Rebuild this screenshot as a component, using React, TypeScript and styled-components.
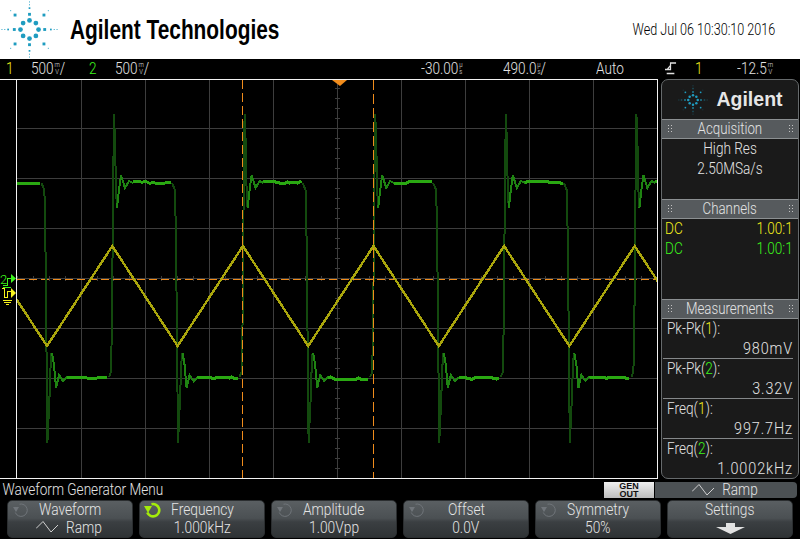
import * as React from "react";
import styled, { createGlobalStyle } from "styled-components";

const YELLOW = "#f7f21c";
const GREEN = "#3df51c";
const ORANGE = "#f08c1c";
const BLUE = "#1f9cc0";

const Global = createGlobalStyle`
  html, body { margin: 0; padding: 0; background: #000; }
  body { font-family: Roboto, "Liberation Sans", Arial, sans-serif; font-weight: 300; }
`;

const Page = styled.div`
  width: 800px;
  height: 539px;
  background: #000;
  color: #e4e4e4;
  display: flex;
  flex-direction: column;
  overflow: hidden;
`;

const Header = styled.header`
  height: 59px;
  background: #fff;
  color: #000;
  display: flex;
  align-items: center;
  justify-content: space-between;
  padding: 0 25px 0 0;
`;

const Brand = styled.div`
  display: flex;
  align-items: center;
  gap: 12px;
  padding-left: 1px;
`;

const Title = styled.div`
  font-family: "Liberation Sans", Arial, sans-serif;
  font-size: 28px;
  font-weight: 700;
  line-height: 59px;
  white-space: nowrap;
  transform: scaleX(0.745);
  transform-origin: left center;
`;

const Clock = styled.div`
  font-size: 16px;
  white-space: nowrap;
  transform: scaleX(0.787);
  transform-origin: right center;
`;

const StatusBar = styled.div`
  height: 20px;
  box-sizing: border-box;
  padding: 0 0 1px 6px;
  display: grid;
  grid-template-columns: 25px 58px 26px 306px 82px 93px 69px 30px 42px 1fr;
  align-items: center;
  font-size: 16px;
  line-height: 19px;
`;

const Cell = styled.span<{ $color?: string }>`
  display: flex;
  align-items: center;
  white-space: nowrap;
  color: ${(p) => p.$color || "inherit"};
  transform: scaleX(0.85);
  transform-origin: left center;
`;

const Units = styled.span`
  display: inline-flex;
  flex-direction: column;
  align-items: center;
  font-size: 7px;
  line-height: 7px;
  margin-left: 1px;
`;

const Middle = styled.div`
  height: 400px;
  display: flex;
`;

const Display = styled.svg`
  width: 658px;
  height: 400px;
  display: block;
  flex: none;
`;

const Panel = styled.aside`
  width: 138px;
  height: 400px;
  margin-left: 3px;
  box-sizing: border-box;
  border: 1px solid #666a6c;
  border-radius: 7px;
  background: #1a1a1a;
  display: flex;
  flex-direction: column;
  overflow: hidden;
  font-size: 16px;
`;

const PanelBrand = styled.div`
  height: 39px;
  flex: none;
  display: flex;
  align-items: center;
  justify-content: center;
  gap: 8px;
  padding-left: 1px;
  font-family: "Liberation Sans", Arial, sans-serif;
  font-size: 19.5px;
  font-weight: 700;
  color: #e6e6e6;
`;

const SectionHead = styled.div`
  height: 20px;
  flex: none;
  box-sizing: border-box;
  border-top: 1px solid #8c9092;
  border-bottom: 1px solid #8c9092;
  background: #565a5d;
  display: flex;
  align-items: center;
  justify-content: space-between;
  padding: 0 5px 2px;
`;

const SectionName = styled.span`
  transform: scaleX(0.83);
`;

const Grip = styled.i`
  width: 5px;
  height: 9px;
  background-image: radial-gradient(circle, #c4c4c4 0.8px, transparent 1px);
  background-size: 3px 3px;
`;

const Body = styled.div<{ $h: number }>`
  height: ${(p) => p.$h}px;
  flex: none;
  display: flex;
  flex-direction: column;
`;

const CenterLine = styled.div`
  height: 20px;
  line-height: 20px;
  text-align: center;
  transform: scaleX(0.85);
`;

const ChannelRow = styled.div<{ $color: string }>`
  height: 20px;
  line-height: 20px;
  display: flex;
  justify-content: space-between;
  padding: 0 5px 0 3px;
  color: ${(p) => p.$color};
`;

const ChannelCoupling = styled.span`
  transform: scaleX(0.85);
  transform-origin: left center;
`;

const ChannelRatio = styled.span`
  transform: scaleX(0.85);
  transform-origin: right center;
`;

const Measure = styled.div<{ $last?: boolean }>`
  height: 40px;
  box-sizing: border-box;
  margin: 0 5px 0 1px;
  padding-left: 4px;
  border-bottom: ${(p) => (p.$last ? "none" : "1px solid #85888a")};
  line-height: 20px;
`;

const MeasureName = styled.div`
  transform: scaleX(0.85);
  transform-origin: left center;
`;

const MeasureValue = styled.div`
  text-align: right;
  letter-spacing: 1px;
  transform: scaleX(0.9);
  transform-origin: right center;
`;

const Tint = styled.span<{ $color: string }>`
  color: ${(p) => p.$color};
`;

const MenuBar = styled.div`
  height: 21px;
  display: flex;
  align-items: center;
`;

const MenuTitle = styled.div`
  font-size: 16px;
  padding-left: 3px;
  width: 604px;
  box-sizing: border-box;
  white-space: nowrap;
  transform: scaleX(0.85);
  transform-origin: left center;
`;

const GenOut = styled.div`
  width: 50px;
  height: 16px;
  background: linear-gradient(#f0f0f0, #bdbdbd);
  color: #111;
  font-family: "Liberation Sans", Arial, sans-serif;
  font-size: 9px;
  font-weight: 700;
  line-height: 8px;
  text-align: center;
`;

const RampTag = styled.div`
  width: 142px;
  height: 16px;
  margin-left: 1px;
  background: #4c5154;
  border-radius: 0 4px 4px 0;
  display: flex;
  align-items: center;
  justify-content: center;
  gap: 5px;
`;

const RampLabel = styled.span`
  transform: scaleX(0.85);
`;

const Keys = styled.div`
  display: flex;
  gap: 6px;
  padding-left: 7px;
  height: 39px;
`;

const Key = styled.div`
  position: relative;
  width: 126px;
  height: 38px;
  box-sizing: border-box;
  border: 1px solid #2b2e30;
  border-radius: 5px;
  background: linear-gradient(#5a5f62, #4b5053 48%, #3b3f42 58%, #2f3335);
  text-align: center;
  font-size: 16px;
`;

const KeyLine = styled.div`
  height: 18px;
  display: flex;
  align-items: center;
  justify-content: center;
  gap: 5px;
  position: relative;
  top: -1px;
`;

const KeyText = styled.span`
  transform: scaleX(0.86);
`;

const Knob = styled.svg`
  position: absolute;
  left: 3px;
  top: -1px;
  width: 20px;
  height: 20px;
`;

const ArrowIcon = styled.svg`
  margin-top: 3px;
`;

// the spark logo, dots and squares on eight spokes
function Spark({ size, color = BLUE }: { size: number; color?: string }) {
  const items: React.ReactNode[] = [];
  for (let i = 0; i < 8; i++) {
    const a = (i * Math.PI) / 4;
    const diag = i % 2 === 1;
    const put = (r: number, s: number, round: boolean) => {
      const x = 30 + r * Math.sin(a);
      const y = 30 - r * Math.cos(a);
      items.push(
        round ? (
          <circle key={`${i}-${r}`} cx={x} cy={y} r={s / 2} fill={color} />
        ) : (
          <rect key={`${i}-${r}`} x={x - s / 2} y={y - s / 2} width={s} height={s} fill={color} />
        )
      );
    };
    put(9.5, 5, true);
    put(diag ? 16 * Math.SQRT2 * 0.95 : 16, 3, false);
    put(diag ? 22 : 22.5, diag ? 1.6 : 1.8, false);
    put(diag ? 28 : 26, 1, false);
    if (!diag) put(29, 1, false);
  }
  return (
    <svg width={size} height={size} viewBox="0 0 60 60">
      {items}
    </svg>
  );
}

function RampIcon() {
  return (
    <svg width="22" height="12" viewBox="0 0 22 12">
      <polyline points="0,7.5 7,0.5 15,11 22,4" fill="none" stroke="#d0d0d0" strokeWidth="1" />
    </svg>
  );
}

function KnobIcon({ active }: { active?: boolean }) {
  const c = active ? "#a4ec0a" : "#70757a";
  return (
    <Knob viewBox="0 0 20 20">
      <path d="M8.5 4.2A6.2 6.2 0 1 1 4.3 12.5" fill="none" stroke={c} strokeWidth={active ? 2.6 : 1} />
      <polygon points={active ? "1,6 9,6 5,13" : "2,7 8,7 5,12"} fill={c} />
    </Knob>
  );
}

function DownArrow() {
  return (
    <ArrowIcon width="29" height="11" viewBox="0 0 29 11">
      <polygon points="0,4 10,4 10,0 19,0 19,4 29,4 14.5,11" fill="#e2e2e2" />
    </ArrowIcon>
  );
}

const PERIOD = 130.6;
const FALL = 47;

// repeatable noise so the flat tops look sampled
function noise(n: number) {
  const v = Math.sin(n * 12.9898) * 43758.5453;
  return v - Math.floor(v);
}

function flat(x0: number, x1: number, y: number, seed: number) {
  const pts: string[] = [];
  let level = 0;
  for (let x = x0; x < x1; x += 2) {
    const r = noise(seed + x);
    if (r < 0.2) level = Math.max(level - 1, -1);
    if (r > 0.8) level = Math.min(level + 1, 1);
    pts.push(`${x},${y + level}`);
  }
  return pts.join(" ");
}

function shift(points: number[][], dx: number) {
  return points.map(([x, y]) => `${x + dx},${y}`).join(" ");
}

const fallEdge = [[172, 183], [175, 190], [176, 240], [177, 340], [178, 443], [180, 400], [181, 370], [182, 353]].map(
  ([x, y]) => [x - PERIOD, y]
);
const fallRing = [[52, 353], [54, 365], [56, 388], [59, 375], [63, 381], [67, 377]];
const riseEdge = [[109, 377], [111, 372], [112, 320], [113, 200], [114, 114], [115, 140], [116, 190], [117, 208]];
const riseRing = [[117, 208], [119, 190], [121, 175], [125, 188], [129, 181], [133, 183]];

function GreenTrace() {
  const parts: React.ReactNode[] = [];
  for (let k = -1; k < 5; k++) {
    const dx = k * PERIOD;
    parts.push(
      <polyline key={`e${k}`} points={shift(fallEdge, dx)} stroke="#134a0e" strokeWidth="2" />,
      <polyline key={`r${k}`} points={shift(fallRing, dx)} stroke="#1f8412" strokeWidth="2" />,
      <polyline key={`l${k}`} points={flat(67 + dx, 109 + dx, 378, k + 3)} stroke="#2aa812" strokeWidth="3" />,
      <polyline key={`u${k}`} points={shift(riseEdge, dx)} stroke="#134a0e" strokeWidth="2" />,
      <polyline key={`q${k}`} points={shift(riseRing, dx)} stroke="#1f8412" strokeWidth="2" />,
      <polyline key={`h${k}`} points={flat(133 + dx, 173 + dx, 182, k + 31)} stroke="#2aa812" strokeWidth="3" />
    );
  }
  return (
    <g clipPath="url(#screen)" fill="none" shapeRendering="crispEdges">
      {parts}
    </g>
  );
}

function YellowTrace() {
  const pts: string[] = [];
  for (let k = -1; k < 6; k++) {
    pts.push(`${FALL + k * PERIOD},346`, `${FALL + PERIOD / 2 + k * PERIOD},246`);
  }
  return (
    <polyline
      points={pts.join(" ")}
      clipPath="url(#screen)"
      fill="none"
      stroke="#aaa60c"
      strokeWidth="2.4"
      shapeRendering="crispEdges"
    />
  );
}

function Graticule() {
  const xs = [81, 145, 209, 273, 337, 401, 465, 529, 593];
  const ys = [128, 178, 228, 278, 328, 378, 428];
  const xTicks: number[] = [];
  for (let x = 17; x < 657; x += 16) xTicks.push(x);
  const yTicks: number[] = [];
  for (let y = 88; y < 478; y += 10) yTicks.push(y);
  return (
    <g shapeRendering="crispEdges" stroke="#3d3d3d" strokeWidth="1">
      {xs.map((x) => (
        <line key={x} x1={x + 0.5} x2={x + 0.5} y1={80} y2={478} />
      ))}
      {ys.map((y) => (
        <line key={y} x1={17} x2={657} y1={y + 0.5} y2={y + 0.5} />
      ))}
      {xTicks.map((x) => (
        <line key={x} x1={x + 0.5} x2={x + 0.5} y1={276} y2={281} />
      ))}
      {yTicks.map((y) => (
        <line key={y} x1={335} x2={340} y1={y + 0.5} y2={y + 0.5} />
      ))}
    </g>
  );
}

function Scope() {
  return (
    <Display viewBox="0 79 658 400">
      <defs>
        <clipPath id="screen">
          <rect x="17" y="80" width="640" height="398" />
        </clipPath>
      </defs>
      <Graticule />
      <g shapeRendering="crispEdges" stroke={ORANGE} strokeWidth="1">
        <line x1="17" x2="657" y1="279.5" y2="279.5" strokeDasharray="8 4" />
      </g>
      <GreenTrace />
      <YellowTrace />
      <g shapeRendering="crispEdges" stroke={ORANGE} strokeWidth="1">
        <line x1="242.5" x2="242.5" y1="80" y2="478" strokeDasharray="9 4" />
        <line x1="373.5" x2="373.5" y1="80" y2="478" strokeDasharray="10 4" />
      </g>
      <polygon points="332,80 347,80 340,86" fill={ORANGE} />

      {/* ground and channel markers left of the grid */}
      <text x="0" y="284" fontSize="13" fill={GREEN}>2</text>
      <g fill="none" stroke={GREEN} strokeWidth="1" shapeRendering="crispEdges">
        <polyline points="3,285.5 7.5,285.5 7.5,278.5 11,278.5" />
        <line x1="3" x2="11" y1="287.5" y2="287.5" />
      </g>
      <polygon points="11,274 16,278.5 11,283" fill={GREEN} />
      <g fill="none" stroke={YELLOW} strokeWidth="1" shapeRendering="crispEdges">
        <polyline points="2,288.5 4.5,288.5 4.5,297.5 7.5,297.5 7.5,291.5 11,291.5" />
        <line x1="3" x2="12" y1="300.5" y2="300.5" />
        <line x1="4" x2="11" y1="302.5" y2="302.5" />
        <line x1="6" x2="9" y1="304.5" y2="304.5" />
      </g>
      <polygon points="11,288 16,293 11,298" fill={YELLOW} />

      {/* white frame */}
      <g stroke="#f2f2f2" strokeWidth="1" shapeRendering="crispEdges">
        <line x1="0" x2="658" y1="79.5" y2="79.5" />
        <line x1="0" x2="658" y1="478.5" y2="478.5" />
        <line x1="16.5" x2="16.5" y1="79" y2="479" />
        <line x1="657.5" x2="657.5" y1="79" y2="479" />
      </g>
    </Display>
  );
}

const measurements = [
  { name: "Pk-Pk", ch: "1", value: "980mV" },
  { name: "Pk-Pk", ch: "2", value: "3.32V" },
  { name: "Freq", ch: "1", value: "997.7Hz" },
  { name: "Freq", ch: "2", value: "1.0002kHz" },
];

function Section({ title }: { title: string }) {
  return (
    <SectionHead>
      <Grip />
      <SectionName>{title}</SectionName>
      <Grip />
    </SectionHead>
  );
}

export default function App() {
  return (
    <Page>
      <Global />
      <Header>
        <Brand>
          <Spark size={57} />
          <Title>Agilent Technologies</Title>
        </Brand>
        <Clock>Wed Jul 06 10:30:10 2016</Clock>
      </Header>
      <StatusBar>
        <Cell $color={YELLOW}>1</Cell>
        <Cell>500<Units><span>m</span><span>V</span></Units>/</Cell>
        <Cell $color={GREEN}>2</Cell>
        <Cell>500<Units><span>m</span><span>V</span></Units>/</Cell>
        <Cell>-30.00<Units><span>µ</span><span>s</span></Units></Cell>
        <Cell>490.0<Units><span>µ</span><span>s</span></Units>/</Cell>
        <Cell>Auto</Cell>
        <Cell>
          <svg width="14" height="13" viewBox="0 0 14 13">
            <path d="M0 7.5H6.5V1H13M2 11.5H11M7 3L3 7" fill="none" stroke="#e0e0e0" strokeWidth="1.4" />
          </svg>
        </Cell>
        <Cell $color={YELLOW}>1</Cell>
        <Cell>-12.5<Units><span>m</span><span>V</span></Units></Cell>
      </StatusBar>
      <Middle>
        <Scope />
        <Panel>
          <PanelBrand>
            <Spark size={30} />
            Agilent
          </PanelBrand>
          <Section title="Acquisition" />
          <Body $h={60}>
            <CenterLine>High Res</CenterLine>
            <CenterLine>2.50MSa/s</CenterLine>
          </Body>
          <Section title="Channels" />
          <Body $h={80}>
            <ChannelRow $color={YELLOW}><ChannelCoupling>DC</ChannelCoupling><ChannelRatio>1.00:1</ChannelRatio></ChannelRow>
            <ChannelRow $color={GREEN}><ChannelCoupling>DC</ChannelCoupling><ChannelRatio>1.00:1</ChannelRatio></ChannelRow>
          </Body>
          <Section title="Measurements" />
          {measurements.map((m, i) => (
            <Measure key={i} $last={i === measurements.length - 1}>
              <MeasureName>
                {m.name}(<Tint $color={m.ch === "1" ? YELLOW : GREEN}>{m.ch}</Tint>):
              </MeasureName>
              <MeasureValue>{m.value}</MeasureValue>
            </Measure>
          ))}
        </Panel>
      </Middle>
      <MenuBar>
        <MenuTitle>Waveform Generator Menu</MenuTitle>
        <GenOut>GEN<br />OUT</GenOut>
        <RampTag>
          <RampIcon />
          <RampLabel>Ramp</RampLabel>
        </RampTag>
      </MenuBar>
      <Keys>
        <Key>
          <KnobIcon />
          <KeyLine><KeyText>Waveform</KeyText></KeyLine>
          <KeyLine><RampIcon /><KeyText>Ramp</KeyText></KeyLine>
        </Key>
        <Key>
          <KnobIcon active />
          <KeyLine><KeyText>Frequency</KeyText></KeyLine>
          <KeyLine><KeyText>1.000kHz</KeyText></KeyLine>
        </Key>
        <Key>
          <KnobIcon />
          <KeyLine><KeyText>Amplitude</KeyText></KeyLine>
          <KeyLine><KeyText>1.00Vpp</KeyText></KeyLine>
        </Key>
        <Key>
          <KnobIcon />
          <KeyLine><KeyText>Offset</KeyText></KeyLine>
          <KeyLine><KeyText>0.0V</KeyText></KeyLine>
        </Key>
        <Key>
          <KnobIcon />
          <KeyLine><KeyText>Symmetry</KeyText></KeyLine>
          <KeyLine><KeyText>50%</KeyText></KeyLine>
        </Key>
        <Key>
          <KeyLine><KeyText>Settings</KeyText></KeyLine>
          <KeyLine><DownArrow /></KeyLine>
        </Key>
      </Keys>
    </Page>
  );
}
